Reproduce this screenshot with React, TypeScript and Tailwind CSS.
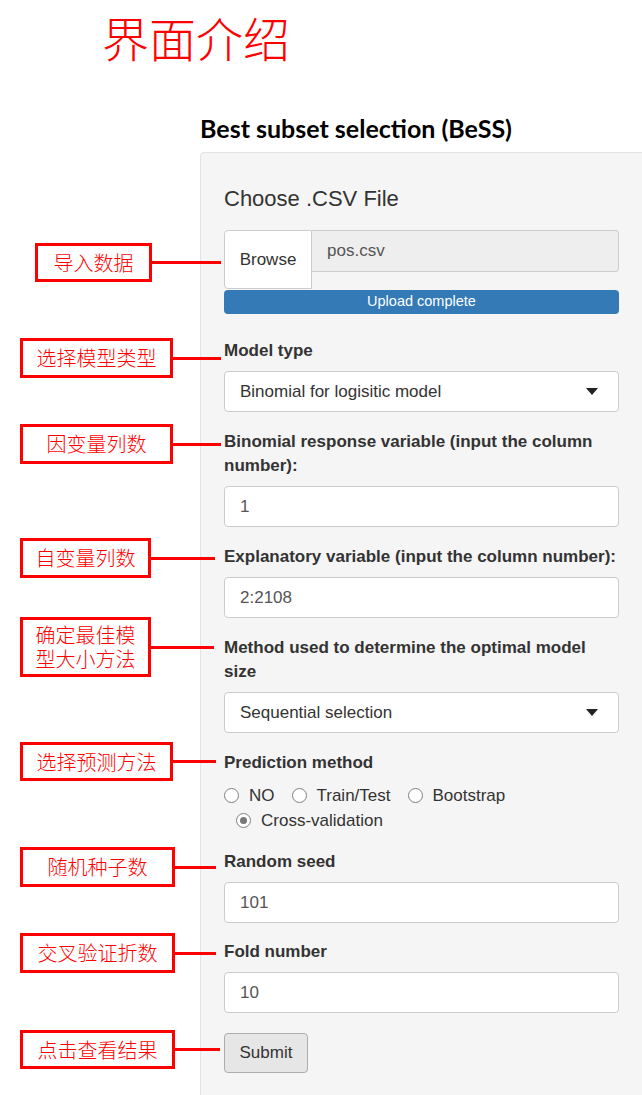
import type { ReactNode } from "react";

// callout: red box + connector line, hangs off the left of a form group
function Callout({
  pos,
  box,
  line,
  children,
}: {
  pos: string;
  box: string;
  line: string;
  children: ReactNode;
}) {
  return (
    <div className={`absolute flex items-center ${pos}`}>
      <div
        className={`flex items-center justify-center border-[3px] border-[#ff0000] bg-white text-center text-[20px] leading-[24px] font-light text-[#ff0000] font-['Noto_Sans_CJK_SC',sans-serif] ${box}`}
      >
        {children}
      </div>
      <div className={`h-[3px] bg-[#ff0000] ${line}`} />
    </div>
  );
}

function Label({ children }: { children: ReactNode }) {
  return (
    <label className="mb-[8px] block text-[17px] leading-[24px] font-bold text-[#333]">
      {children}
    </label>
  );
}

function TextInput({ value }: { value: string }) {
  return (
    <div className="flex h-[41px] items-center rounded-[4px] border border-[#ccc] bg-white pl-[15px] text-[17px] text-[#555]">
      {value}
    </div>
  );
}

function Select({ value }: { value: string }) {
  return (
    <div className="flex h-[41px] items-center justify-between rounded-[4px] border border-[#ccc] bg-white pr-[20px] pl-[15px] text-[17px] text-[#333]">
      <span>{value}</span>
      <svg width="12" height="7" viewBox="0 0 12 7">
        <path d="M0 0h12L6 7z" fill="#222" />
      </svg>
    </div>
  );
}

function Radio({ label, checked = false }: { label: string; checked?: boolean }) {
  return (
    <span className="flex items-center gap-[10px]">
      <span className="flex h-[15px] w-[15px] items-center justify-center rounded-full border border-[#808080] bg-white">
        {checked && <span className="h-[7px] w-[7px] rounded-full bg-[#777]" />}
      </span>
      <span>{label}</span>
    </span>
  );
}

export default function App() {
  return (
    <div className="relative h-[1095px] w-[642px] overflow-hidden bg-white font-['Liberation_Sans',Arial,sans-serif]">
      <h1 className="h-[65px] pt-[9px] pl-[102px] text-[47px] leading-[56px] font-light text-[#ff0000] font-['Noto_Sans_CJK_SC',serif]">
        界面介绍
      </h1>

      <h2 className="mt-[48px] ml-[200px] h-[30px] text-[25px] leading-[30px] font-bold text-black font-['Lato',sans-serif]">
        Best subset selection (BeSS)
      </h2>

      <div className="mt-[9px] ml-[200px] w-[443px] rounded-tl-[4px] border border-[#e3e3e3] bg-[#f5f5f5] px-[23px] pt-[32px] pb-[40px]">
        <div className="text-[22px] leading-[28px] text-[#333]">Choose .CSV File</div>

        {/* file input */}
        <div className="relative mt-[17px]">
          <Callout pos="left-[-189px] top-[13px]" box="w-[117px] h-[39px]" line="w-[69px]">
            导入数据
          </Callout>
          <div className="flex items-start">
            <div className="flex h-[59px] w-[88px] items-center justify-center rounded-l-[4px] border border-[#ccc] bg-white text-[17px] text-[#333]">
              Browse
            </div>
            <div className="flex h-[42px] flex-1 items-center rounded-r-[4px] border border-l-0 border-[#ccc] bg-[#eee] pl-[15px] text-[17px] text-[#555]">
              pos.csv
            </div>
          </div>
          <div className="mt-px flex h-[24px] items-center justify-center rounded-[4px] bg-[#337ab7] text-[14.5px] text-white">
            Upload complete
          </div>
        </div>

        <div className="relative mt-[25px]">
          <Callout pos="left-[-204px] top-[-1px]" box="w-[153px] h-[40px]" line="w-[48px]">
            选择模型类型
          </Callout>
          <Label>Model type</Label>
          <Select value="Binomial for logisitic model" />
        </div>

        <div className="relative mt-[18px]">
          <Callout pos="left-[-204px] top-[-6px]" box="w-[153px] h-[40px]" line="w-[48px]">
            因变量列数
          </Callout>
          <Label>Binomial response variable (input the column number):</Label>
          <TextInput value="1" />
        </div>

        <div className="relative mt-[18px]">
          <Callout pos="left-[-204px] top-[-7px]" box="w-[131px] h-[40px]" line="w-[64px]">
            自变量列数
          </Callout>
          <Label>Explanatory variable (input the column number):</Label>
          <TextInput value="2:2108" />
        </div>

        <div className="relative mt-[18px]">
          <Callout pos="left-[-204px] top-[-19px]" box="w-[131px] h-[60px]" line="w-[63px]">
            确定最佳模
            <br />
            型大小方法
          </Callout>
          <Label>Method used to determine the optimal model size</Label>
          <Select value="Sequential selection" />
        </div>

        <div className="relative mt-[18px]">
          <Callout pos="left-[-204px] top-[-9px]" box="w-[153px] h-[39px]" line="w-[43px]">
            选择预测方法
          </Callout>
          <Label>Prediction method</Label>
          <div className="text-[17px] leading-[25px] text-[#333]">
            <div className="flex gap-[17px]">
              <Radio label="NO" />
              <Radio label="Train/Test" />
              <Radio label="Bootstrap" />
            </div>
            <div className="flex pl-[12px]">
              <Radio label="Cross-validation" checked />
            </div>
          </div>
        </div>

        <div className="relative mt-[17px]">
          <Callout pos="left-[-204px] top-[-3px]" box="w-[155px] h-[40px]" line="w-[41px]">
            随机种子数
          </Callout>
          <Label>Random seed</Label>
          <TextInput value="101" />
        </div>

        <div className="relative mt-[17px]">
          <Callout pos="left-[-204px] top-[-7px]" box="w-[155px] h-[40px]" line="w-[41px]">
            交叉验证折数
          </Callout>
          <Label>Fold number</Label>
          <TextInput value="10" />
        </div>

        <div className="relative mt-[20px]">
          <Callout pos="left-[-204px] top-[-3px]" box="w-[155px] h-[39px]" line="w-[45px]">
            点击查看结果
          </Callout>
          <button className="h-[40px] w-[84px] rounded-[4px] border border-[#adadad] bg-[#e6e6e6] text-[17px] text-[#333]">
            Submit
          </button>
        </div>
      </div>
    </div>
  );
}
